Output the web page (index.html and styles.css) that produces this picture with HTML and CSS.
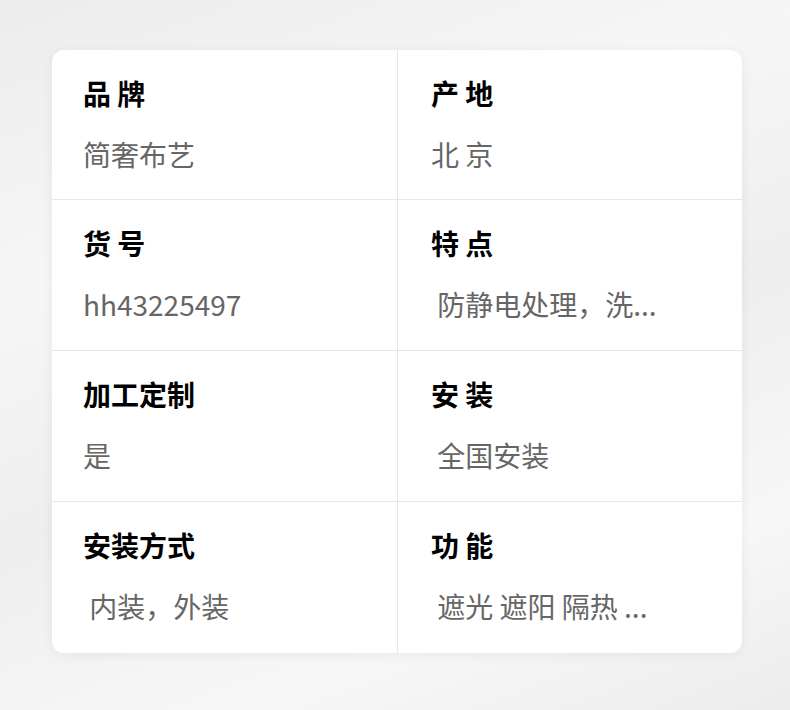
FILE: index.html
```html
<!DOCTYPE html>
<html>
  <head>
    <title>商品参数</title>
    <link rel="stylesheet" href="styles.css">
  </head>
  <body>
    <div class="params">
      <div class="cell">
        <div class="label">品 牌</div>
        <div class="value">简奢布艺</div>
      </div>
      <div class="cell">
        <div class="label">产 地</div>
        <div class="value">北 京</div>
      </div>
      <div class="cell">
        <div class="label">货 号</div>
        <div class="value">hh43225497</div>
      </div>
      <div class="cell">
        <div class="label">特 点</div>
        <div class="value"> 防静电处理，洗...</div>
      </div>
      <div class="cell">
        <div class="label">加工定制</div>
        <div class="value">是</div>
      </div>
      <div class="cell">
        <div class="label">安 装</div>
        <div class="value"> 全国安装</div>
      </div>
      <div class="cell">
        <div class="label">安装方式</div>
        <div class="value"> 内装，外装</div>
      </div>
      <div class="cell">
        <div class="label">功 能</div>
        <div class="value"> 遮光 遮阳 隔热 ...</div>
      </div>
    </div>
  </body>
</html>
```

FILE: styles.css
```css
html,
body {
  height: 100%;
}
body {
  margin: 0;
  padding: 50px 48px 0 52px;
  box-sizing: border-box;
  background: linear-gradient(160deg, #ececec 0%, #f6f6f6 30%, #eeeeee 55%, #f7f7f7 80%, #ececec 100%);
  font-family: "Noto Sans CJK SC", "Noto Sans", sans-serif;
}
.params {
  width: 690px;
  background-color: #fff;
  border-radius: 12px;
  box-shadow: 0 2px 12px rgba(0, 0, 0, 0.06);
  display: grid;
  grid-template-columns: 345px 345px;
  overflow: hidden;
}
.cell {
  height: 150px;
  padding: 26px 0 0 31px;
  box-sizing: border-box;
  border-bottom: 1px solid #e6e6e6;
}
.cell:nth-child(2n) {
  padding-left: 33px;
  border-left: 1px solid #e6e6e6;
}
.cell:nth-child(n+3) {
  height: 151px;
}
.cell:nth-last-child(-n+2) {
  border-bottom: none;
}
.label {
  font-size: 28px;
  line-height: 34px;
  font-weight: 700;
  color: #000;
}
.value {
  margin-top: 27px;
  font-size: 28px;
  line-height: 34px;
  color: #666;
  white-space: pre;
}
```
